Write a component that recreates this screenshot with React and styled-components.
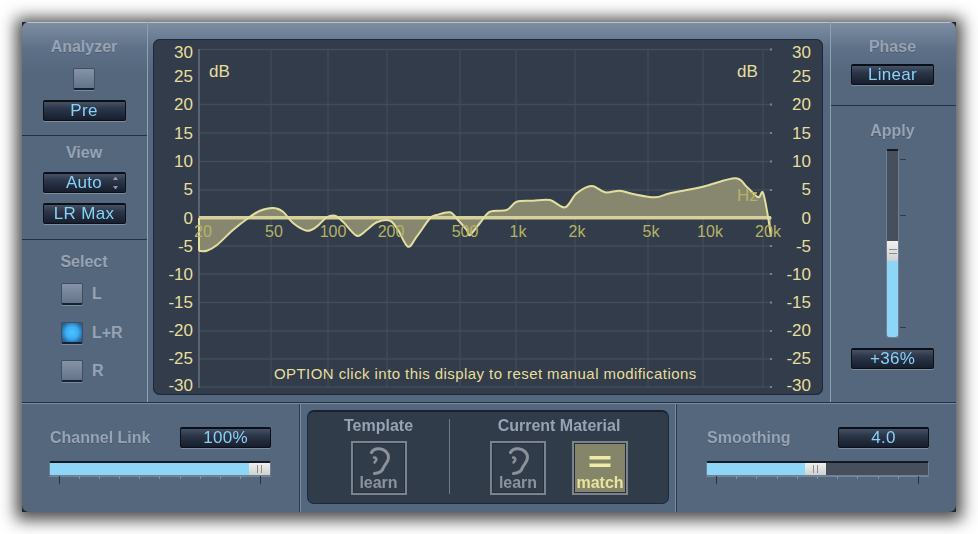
import React from 'react';
import styled, { createGlobalStyle } from 'styled-components';

const FONT = '"Liberation Sans", Arial, sans-serif';
const FACE = '#55677d';
const LABEL = '#97a3b3';
const LCD_TEXT = '#86d2f8';
const SCALE_TEXT = '#e6df9c';
const FREQ_TEXT = '#b6b364';
const GRID = '#434c5a';
const BLUE = '#8ed6f8';
const TOP_SHADE = 'linear-gradient(#b9c4d0 0, #b9c4d0 1px, #7d8ea4 1px, #5f7188 26px, #55677d 52px)';

const GlobalStyle = createGlobalStyle`
  html, body {
    margin: 0;
    padding: 0;
    background: #fff;
    font-family: ${FONT};
  }
`;

const Page = styled.div`
  width: 978px;
  height: 534px;
  padding: 22px;
  box-sizing: border-box;
  overflow: hidden;
  background: #fff;
`;

const Chassis = styled.div`
  width: 934px;
  height: 490px;
  background: #23272d;
  box-shadow: 0 2px 15px 6px rgba(25, 25, 25, 0.78);
`;

const Face = styled.div`
  height: 100%;
  border-radius: 7px;
  overflow: hidden;
  background: ${FACE};
  display: flex;
  flex-direction: column;
  filter: blur(0.45px);
`;

const TopRow = styled.div`
  height: 380px;
  flex: none;
  display: flex;
  border-bottom: 1px solid #1f3048;
`;

const SideColumn = styled.div`
  width: 126px;
  flex: none;
  box-sizing: border-box;
  display: flex;
  flex-direction: column;
  background: ${FACE};
  ${(props) =>
    props.$right ? 'border-left: 1px solid #8fa0b4;' : 'border-right: 1px solid #8fa0b4;'}
`;

const Section = styled.section`
  height: ${(props) => props.$height}px;
  flex: ${(props) => (props.$grow ? '1' : 'none')};
  box-sizing: border-box;
  display: flex;
  flex-direction: column;
  align-items: center;
  padding-top: ${(props) => props.$pad}px;
  padding-right: ${(props) => props.$inset || 0}px;
  background: ${(props) => (props.$top ? TOP_SHADE : FACE)};
  ${(props) =>
    props.$rule ? 'border-bottom: 1px solid #1f3048; box-shadow: 0 1px 0 #7a8ba0;' : ''}
`;

const Label = styled.div`
  font-size: 16px;
  line-height: 18px;
  font-weight: bold;
  color: ${LABEL};
  text-shadow: 0 1px 0 rgba(40, 55, 75, 0.35);
  white-space: nowrap;
`;

const Lcd = styled.div`
  width: ${(props) => props.$width || 83}px;
  height: 21px;
  flex: none;
  box-sizing: border-box;
  margin-top: ${(props) => props.$top || 0}px;
  border: 1px solid #0b0f18;
  border-top: 2px solid #0b0f18;
  border-radius: 2px;
  background: linear-gradient(#465266 0, #2d374a 35%, #161e2e 100%);
  box-shadow: 0 1px 0 #7d8da1;
  color: ${LCD_TEXT};
  font-size: 17px;
  line-height: 18px;
  letter-spacing: 0.3px;
  text-align: center;
  position: relative;
`;

const Stepper = styled.span`
  position: absolute;
  right: 7px;
  top: 3px;
  width: 5px;
  height: 12px;
  display: flex;
  flex-direction: column;
  justify-content: space-between;

  &::before {
    content: '';
    border-left: 2.5px solid transparent;
    border-right: 2.5px solid transparent;
    border-bottom: 3px solid #8d96a3;
  }
  &::after {
    content: '';
    border-left: 2.5px solid transparent;
    border-right: 2.5px solid transparent;
    border-top: 3px solid #8d96a3;
  }
`;

const Led = styled.div`
  width: 22px;
  height: 22px;
  flex: none;
  box-sizing: border-box;
  margin-top: ${(props) => props.$top || 0}px;
  border: 1px solid #3e4d62;
  border-bottom: 2px solid #18222f;
  border-radius: 2px;
  background: ${(props) =>
    props.$on
      ? 'radial-gradient(circle at 50% 50%, #50c4ff 0, #38aef5 45%, #2a5f8f 85%)'
      : 'linear-gradient(#8493a6, #64748a)'};
  box-shadow: 0 1px 0 #7a8ba0;
`;

const SelectList = styled.div`
  width: 100%;
  box-sizing: border-box;
  padding: 12px 0 0 39px;
  display: flex;
  flex-direction: column;
  gap: 16.5px;
`;

const SelectRow = styled.div`
  display: flex;
  align-items: center;
  gap: 9px;
  font-size: 16px;
  font-weight: bold;
  color: ${LABEL};
`;

const Center = styled.div`
  flex: 1;
  min-width: 0;
  box-sizing: border-box;
  padding: 17px 7px 7px 5px;
  background: ${TOP_SHADE};
`;

const Display = styled.div`
  height: 356px;
  box-sizing: border-box;
  border-radius: 7px;
  overflow: hidden;
  background: #323c4a;
  box-shadow: inset 0 0 0 1px #1c2840;
`;

const Plot = styled.svg`
  display: block;
  width: 100%;
  height: 100%;
  font-family: ${FONT};
`;

const BottomRow = styled.div`
  flex: 1;
  display: grid;
  grid-template-columns: 277px 378px 1fr;
  border-top: 1px solid #7a8ba0;
`;

const BottomCell = styled.div`
  box-sizing: border-box;
  padding: ${(props) => props.$pad};
  ${(props) =>
    props.$divided
      ? 'border-left: 1px solid #2a3a50; border-right: 1px solid #2a3a50; box-shadow: inset 1px 0 0 #7a8ba0, inset -1px 0 0 #7a8ba0;'
      : ''}
`;

const SliderHead = styled.div`
  display: flex;
  align-items: center;
  justify-content: space-between;
  height: 21px;
  padding-left: 1px;
`;

const HSlider = styled.div`
  margin-top: 13px;
  height: 15px;
  box-sizing: border-box;
  display: flex;
  border: 1px solid #6f7f93;
  border-top: 2px solid #141a24;
  border-radius: 2px;
  background: #474f5c;
`;

const HFill = styled.div`
  background: ${BLUE};
`;

const HThumb = styled.div`
  width: 21px;
  flex: none;
  display: flex;
  align-items: center;
  justify-content: center;
  background: linear-gradient(#f0f0f0, #cfd0d0);

  &::after {
    content: '';
    width: 3px;
    height: 8px;
    border-left: 1px solid #8c8c8c;
    border-right: 1px solid #8c8c8c;
  }
`;

const TickRow = styled.div`
  height: 7px;
  padding: 0 10px;
  display: flex;
  justify-content: space-between;
  align-items: flex-start;
  box-shadow: inset 0 1px 0 #76869a;
`;

const Tick = styled.i`
  display: block;
  width: 1px;
  height: ${(props) => (props.$long ? 8 : 3)}px;
  background: ${(props) => (props.$long ? '#243348' : '#8494a8')};
`;

const MatchPanel = styled.div`
  height: 94px;
  box-sizing: border-box;
  border-radius: 7px;
  border: 1px solid #1c2640;
  border-top: 2px solid #1a2030;
  background: #313c4b;
  display: flex;
  padding-top: 5px;
`;

const MatchGroup = styled.div`
  width: ${(props) => props.$width}px;
  flex: none;
  display: flex;
  flex-direction: column;
  align-items: center;
`;

const MatchDivider = styled.div`
  width: 1px;
  height: 75px;
  margin-top: 2px;
  flex: none;
  background: #717985;
`;

const MatchButtons = styled.div`
  display: flex;
  gap: 26px;
  margin-top: 6px;
`;

const LearnButton = styled.div`
  width: 56px;
  height: 54px;
  box-sizing: border-box;
  border: 2px solid #7d838c;
  outline: 1px solid #262e3b;
  outline-offset: -3px;
  padding-top: 4px;
  background: ${(props) => (props.$active ? '#85856a' : 'transparent')};
  color: ${(props) => (props.$active ? '#e8e49c' : '#8d929a')};
  display: flex;
  flex-direction: column;
  align-items: center;
  font-size: 16px;
  font-weight: bold;
  line-height: 16px;
`;

const ButtonGlyph = styled.svg`
  display: block;
  width: 24px;
  height: 28px;
  flex: none;
`;

const VSliderRow = styled.div`
  display: flex;
  margin-top: 9px;
  margin-left: 7px;
  height: 189px;
`;

const VSlider = styled.div`
  width: 13px;
  box-sizing: border-box;
  display: flex;
  flex-direction: column;
  border: 1px solid #6f7f93;
  border-top: 2px solid #141a24;
  border-radius: 2px;
  background: #474f5c;
`;

const VSpace = styled.div`
  flex: 1;
`;

const VThumb = styled.div`
  height: 20px;
  flex: none;
  display: flex;
  align-items: center;
  justify-content: center;
  background: linear-gradient(#f0f0f0, #cfd0d0);

  &::after {
    content: '';
    width: 8px;
    height: 3px;
    border-top: 1px solid #8c8c8c;
    border-bottom: 1px solid #8c8c8c;
  }
`;

const VFill = styled.div`
  flex: none;
  background: ${BLUE};
  border-radius: 0 0 2px 2px;
`;

const VTicks = styled.div`
  padding: 10px 0 10px 1px;
  display: flex;
  flex-direction: column;
  justify-content: space-between;
`;

const VTick = styled.i`
  display: block;
  width: 6px;
  height: 1px;
  background: #2a3b52;
  visibility: ${(props) => (props.$hidden ? 'hidden' : 'visible')};
`;

const DB_ROWS = [
  { label: '30', y: 58, line: 49.5 },
  { label: '25', y: 82 },
  { label: '20', y: 110, line: 104.5 },
  { label: '15', y: 139, line: 133 },
  { label: '10', y: 167, line: 161.5 },
  { label: '5', y: 195, line: 190 },
  { label: '0', y: 224, line: 218 },
  { label: '-5', y: 252, line: 246 },
  { label: '-10', y: 280, line: 274 },
  { label: '-15', y: 308, line: 302.5 },
  { label: '-20', y: 336, line: 331 },
  { label: '-25', y: 364, line: 359 },
  { label: '-30', y: 391, line: 387 }
];

const FREQ_LINES = [271, 328, 387, 460, 516, 575, 648, 703, 763];

const FREQ_LABELS = [
  ['20', 203],
  ['50', 274],
  ['100', 333],
  ['200', 391],
  ['500', 465],
  ['1k', 518],
  ['2k', 577],
  ['5k', 651],
  ['10k', 710],
  ['20k', 768]
];

const CURVE = [
  [199, 251], [207, 250.7], [217, 245], [233, 230], [250, 216.7], [260, 210.7], [273, 208],
  [283, 211.7], [293, 223], [306.7, 230.7], [316.7, 226.7], [326.7, 217.3], [335, 215.7],
  [343, 221.7], [356.7, 235.7], [366.7, 230], [376.7, 222.3], [390, 220.7], [398, 230],
  [408, 246.7], [416.7, 236.7], [430, 218.3], [436.7, 215], [450, 212.3], [458, 220],
  [466.7, 230], [470, 235], [480, 223], [490, 211.7], [506.7, 210], [516.7, 201.7],
  [533, 200.7], [550, 200], [565, 207.3], [576.7, 193.3], [591.7, 186], [605, 192.3],
  [620, 190.7], [633, 194], [655, 197.3], [670, 193.3], [703, 186.7], [735, 178.3],
  [746.7, 186.7], [758, 197.3], [763, 192.7], [768, 216.7], [771, 236.7]
];

// Catmull-Rom through the traced points, so the curve stays soft
const smoothPath = (points) =>
  points.reduce((d, [x, y], i) => {
    if (i === 0) return `M${x} ${y}`;
    const p0 = points[i - 2] || points[i - 1];
    const p1 = points[i - 1];
    const p3 = points[i + 1] || [x, y];
    const c1 = [p1[0] + (x - p0[0]) / 6, p1[1] + (y - p0[1]) / 6];
    const c2 = [x - (p3[0] - p1[0]) / 6, y - (p3[1] - p1[1]) / 6];
    return `${d}C${c1[0]} ${c1[1]} ${c2[0]} ${c2[1]} ${x} ${y}`;
  }, '');

const curvePath = smoothPath(CURVE);

const EqPlot = () => (
  <Plot viewBox="153 39 670 356">
    {DB_ROWS.filter((row) => row.line).map((row) => (
      <line key={row.label} x1="199" x2="772" y1={row.line} y2={row.line} stroke={GRID} strokeWidth="1.4" />
    ))}
    {FREQ_LINES.map((x) => (
      <line key={x} x1={x} x2={x} y1="50" y2="387" stroke={GRID} strokeWidth="1.2" />
    ))}
    <line x1="199" x2="199" y1="49" y2="388" stroke="#6d7581" strokeWidth="1.4" />
    {DB_ROWS.filter((row) => row.line).map((row) => (
      <rect key={row.label} x="770" y={row.line - 1} width="2" height="2" fill="#7b828c" />
    ))}

    <path d={`${curvePath}L771 218L199 218Z`} fill="#878770" />
    <rect x="199" y="216" width="572" height="3.5" fill="#d4d199" />
    <path d={curvePath} fill="none" stroke="#e2df9f" strokeWidth="2" />
    <line x1="199" x2="199" y1="218" y2="251" stroke="#e2df9f" strokeWidth="2" />

    <g fontSize="17" fill={SCALE_TEXT} textAnchor="end">
      {DB_ROWS.map((row) => (
        <text key={row.label} x="193" y={row.y}>{row.label}</text>
      ))}
    </g>
    <g fontSize="17" fill={SCALE_TEXT} textAnchor="end">
      {DB_ROWS.map((row) => (
        <text key={row.label} x="811" y={row.y}>{row.label}</text>
      ))}
    </g>
    <text x="209" y="77" fontSize="17" fill={SCALE_TEXT}>dB</text>
    <text x="737" y="77" fontSize="17" fill={SCALE_TEXT}>dB</text>
    <text x="737" y="201" fontSize="17" fill={FREQ_TEXT}>Hz</text>
    <g fontSize="16" fill={FREQ_TEXT} textAnchor="middle">
      {FREQ_LABELS.map(([label, x]) => (
        <text key={label} x={x} y="237">{label}</text>
      ))}
    </g>
    <text x="274" y="379" fontSize="15" letterSpacing="0.43" fill={SCALE_TEXT}>
      OPTION click into this display to reset manual modifications
    </text>
  </Plot>
);

const EarGlyph = () => (
  <ButtonGlyph viewBox="0 0 24 28">
    <g fill="none" stroke="#8d929a" strokeWidth="3" strokeLinecap="round">
      <path d="M4.500 5.500C6 2.500 9 1.500 12.500 1.800C18 2.300 21.500 6 21.500 10.500C21.500 15 18 17 16.500 20.500C15.500 24 13 26 7.500 26.500" />
      <path d="M7 10.500C9 10.500 10 12 9 13.500L7.500 15.500" strokeWidth="2.4" />
    </g>
  </ButtonGlyph>
);

const EqualsGlyph = () => (
  <ButtonGlyph viewBox="0 0 24 28">
    <g fill="#efeba6">
      <rect x="1.500" y="9" width="21" height="3.500" />
      <rect x="1.500" y="16.500" width="21" height="3.500" />
    </g>
  </ButtonGlyph>
);

const SliderTicks = () => (
  <TickRow>
    {Array.from({ length: 11 }, (_, i) => (
      <Tick key={i} $long={i === 0 || i === 10} />
    ))}
  </TickRow>
);

const App = () => (
  <Page>
    <GlobalStyle />
    <Chassis>
      <Face>
        <TopRow>
          <SideColumn>
            <Section $height={114} $pad={16} $inset={1} $top $rule>
              <Label>Analyzer</Label>
              <Led $top={12} />
              <Lcd $top={10}>Pre</Lcd>
            </Section>
            <Section $height={104} $pad={8} $inset={1} $rule>
              <Label>View</Label>
              <Lcd $top={10}>
                Auto
                <Stepper />
              </Lcd>
              <Lcd $top={10}>LR Max</Lcd>
            </Section>
            <Section $grow $pad={13} $inset={1}>
              <Label>Select</Label>
              <SelectList>
                <SelectRow>
                  <Led />L
                </SelectRow>
                <SelectRow>
                  <Led $on />L+R
                </SelectRow>
                <SelectRow>
                  <Led />R
                </SelectRow>
              </SelectList>
            </Section>
          </SideColumn>

          <Center>
            <Display>
              <EqPlot />
            </Display>
          </Center>

          <SideColumn $right>
            <Section $height={84} $pad={16} $inset={2} $top $rule>
              <Label>Phase</Label>
              <Lcd $top={8}>Linear</Lcd>
            </Section>
            <Section $grow $pad={16} $inset={2}>
              <Label>Apply</Label>
              <VSliderRow>
                <VSlider>
                  <VSpace />
                  <VThumb />
                  <VFill style={{ height: 76 }} />
                </VSlider>
                <VTicks>
                  <VTick />
                  <VTick />
                  <VTick $hidden />
                  <VTick />
                </VTicks>
              </VSliderRow>
              <Lcd $top={10}>+36%</Lcd>
            </Section>
          </SideColumn>
        </TopRow>

        <BottomRow>
          <BottomCell $pad="23px 28px 0 27px">
            <SliderHead>
              <Label>Channel Link</Label>
              <Lcd $width={91}>100%</Lcd>
            </SliderHead>
            <HSlider>
              <HFill style={{ flex: 1 }} />
              <HThumb />
            </HSlider>
            <SliderTicks />
          </BottomCell>

          <BottomCell $divided $pad="6px 7px 0 7px">
            <MatchPanel>
              <MatchGroup $width={141}>
                <Label>Template</Label>
                <MatchButtons>
                  <LearnButton>
                    <EarGlyph />
                    learn
                  </LearnButton>
                </MatchButtons>
              </MatchGroup>
              <MatchDivider />
              <MatchGroup $width={218}>
                <Label>Current Material</Label>
                <MatchButtons>
                  <LearnButton>
                    <EarGlyph />
                    learn
                  </LearnButton>
                  <LearnButton $active>
                    <EqualsGlyph />
                    match
                  </LearnButton>
                </MatchButtons>
              </MatchGroup>
            </MatchPanel>
          </BottomCell>

          <BottomCell $pad="23px 27px 0 29px">
            <SliderHead>
              <Label>Smoothing</Label>
              <Lcd $width={91}>4.0</Lcd>
            </SliderHead>
            <HSlider>
              <HFill style={{ width: 98 }} />
              <HThumb />
            </HSlider>
            <SliderTicks />
          </BottomCell>
        </BottomRow>
      </Face>
    </Chassis>
  </Page>
);

export default App;
